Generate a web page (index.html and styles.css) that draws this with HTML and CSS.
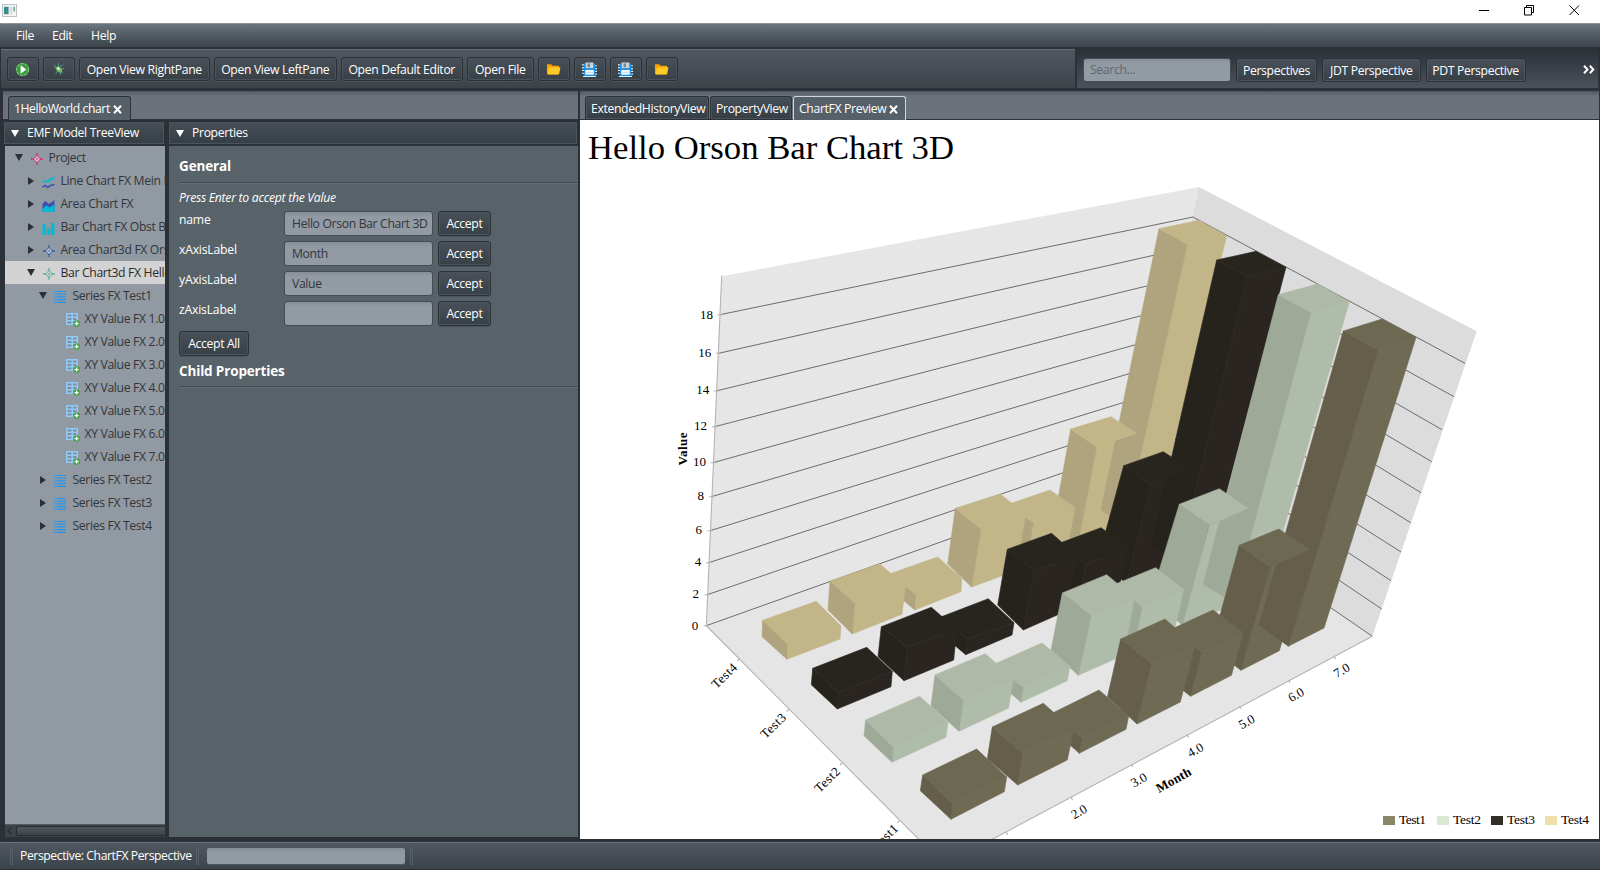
FILE: index.html
```
<!DOCTYPE html>
<html lang="en">
<head>
<meta charset="utf-8">
<title>ChartFX Perspective</title>
<link rel="stylesheet" href="styles.css">
</head>
<body>
<svg class="defs" width="0" height="0">
  <symbol id="folder" viewBox="0 0 16 16"><path d="M1 3.2Q1 2.500 1.800 2.500H5.500L7 4H13.200Q14 4 14 5V13H2Q1 13 1 12Z" fill="#ffa000"/><path d="M3.600 5.600H14.600Q15.500 5.600 15.300 6.500L14 12.600Q13.800 13.400 13 13.400H2.200Q1.500 13.400 1.700 12.600L3 6.200Q3.100 5.600 3.600 5.600Z" fill="#ffca28"/></symbol>
  <symbol id="save" viewBox="0 0 16 16"><path d="M3 1H13L14 3V15H2V2.500Z" fill="#1f8fe8"/><path d="M0 3H2M0 6H2M0 9H2M0 12H2M14 4H16M14 7H16M14 10H16M14 13H16M1 15.500H15" stroke="#d8f2fb" stroke-width="1.300"/><rect x="4" y="0.500" width="8" height="6" fill="#c9d4db"/><rect x="6" y="1.500" width="2.500" height="4" fill="#75858f"/><rect x="3.500" y="8.500" width="9" height="5" fill="#f6fbff"/><path d="M3.500 11H12.500" stroke="#b9d9ee"/></symbol>
  <symbol id="line" viewBox="0 0 13 13"><path d="M0.500 6L3.500 5L6 6L8.500 2.500L10 3.500L12.500 1" fill="none" stroke="#00bcd4" stroke-width="1.500"/><path d="M0.500 11L3.500 9.500L5.500 11.500L8.500 9.500L12.500 8.500" fill="none" stroke="#3f51b5" stroke-width="1.600"/></symbol>
  <symbol id="area" viewBox="0 0 13 13"><path d="M0.500 4.500L3.500 2L7 5L12.500 1V13H0.500Z" fill="#3f51b5"/><path d="M0.500 9.500L4.500 6.500L7.500 8.500L12.500 5.500V13H0.500Z" fill="#00bcd4"/></symbol>
  <symbol id="bar" viewBox="0 0 13 13"><path d="M0.500 2H3.800V13H0.500ZM4.800 6.500H8.200V13H4.800ZM9.200 1H12.500V13H9.200Z" fill="#00bcd4"/></symbol>
  <symbol id="star" viewBox="0 0 12 12"><path d="M6 2.500L9.500 6L6 9.500L2.500 6Z" fill="#d9d9d9" stroke="currentColor" stroke-width="0.900"/><path d="M6 0V3M6 9V12M0 6H3M9 6H12" stroke="currentColor" stroke-width="1.400" stroke-dasharray="1.600 0.600"/><path d="M4.500 6H7.500M6 4.500V7.500" stroke="currentColor" stroke-width="0.600"/></symbol>
  <symbol id="list" viewBox="0 0 12 12"><path d="M0 .5H1.500M0 3.200H1.500M0 5.900H1.500M0 8.600H1.500M0 11.300H1.500M2.500 .5H12M2.500 3.200H12M2.500 5.900H12M2.500 8.600H12M2.500 11.300H12" stroke="#2196f3" stroke-width="1.200"/></symbol>
  <symbol id="grid" viewBox="0 0 14 14"><path d="M0 0H12V12H0Z" fill="#90caf9"/><path d="M1.500 1.500H5.500V3.500H1.500ZM7 1.500H10.500V3.500H7ZM1.500 5H5.500V7H1.500ZM7 5H10.500V7H7ZM1.500 8.500H5.500V10.500H1.500ZM7 8.500H10.500V10.500H7Z" fill="#858f9a"/><circle cx="10.600" cy="10.600" r="3.300" fill="#43a047"/><path d="M8.600 10.600H12.600M10.600 8.600V12.600" stroke="#fff" stroke-width="1.300"/></symbol>
  <symbol id="cross" viewBox="0 0 9 9"><path d="M1 0.800L8 8.200M8 0.800L1 8.200" stroke="#fff" stroke-width="2"/></symbol>
</svg>

<header class="titlebar">
  <svg class="app-icon" viewBox="0 0 16 14"><rect x=".5" y=".5" width="15" height="13" fill="#f3f4f4" stroke="#b9bdbf"/><path d="M2 3H7V11H2Z" fill="#3d8a8c"/><path d="M8 3H11V11H8Z" fill="#d8dedf"/><path d="M12 3H14V8H12Z" fill="#78b59a"/></svg>
  <svg class="win-ctl" viewBox="0 0 105 12"><path d="M1 6.500H11M46.500 3.500H53.500V11H46.500ZM48.500 3.500V1.500H55.500V8.500H53.500M91.500 1.500L101 11M101 1.500L91.500 11" fill="none" stroke="#000"/></svg>
</header>

<nav class="menubar"><span>File</span><span>Edit</span><span>Help</span></nav>

<div class="toolbars">
  <div class="toolbar main">
    <button class="btn ico"><svg viewBox="0 0 16 16"><circle cx="8" cy="8" r="7.300" fill="#3c9a41"/><circle cx="8" cy="8" r="6.300" fill="none" stroke="#9bd49a" stroke-dasharray="3 1.500"/><path d="M6 3.500L12 8L6 12.500Z" fill="#fff"/></svg></button>
    <button class="btn ico"><svg viewBox="0 0 16 16"><path d="M3 3L13 12M8 1V5M3 6L7 7M9 5L13 3M7 9L5 13M11 7L14 7M10 10L10 14" stroke="#4e9a84" stroke-width="1"/><ellipse cx="8.700" cy="8" rx="3.900" ry="2.500" transform="rotate(45 8.700 8)" fill="#77b765"/><ellipse cx="7.800" cy="7" rx="1.700" ry="1.200" transform="rotate(45 7.800 7)" fill="#d8f1e4"/></svg></button>
    <button class="btn b-right">Open View RightPane</button>
    <button class="btn b-left">Open View LeftPane</button>
    <button class="btn b-editor">Open Default Editor</button>
    <button class="btn b-file">Open File</button>
    <button class="btn ico"><svg><use href="#folder"/></svg></button>
    <button class="btn ico"><svg><use href="#save"/></svg></button>
    <button class="btn ico"><svg><use href="#save"/></svg></button>
    <button class="btn ico"><svg><use href="#folder"/></svg></button>
  </div>
  <div class="toolbar side">
    <div class="field search">Search...</div>
    <button class="btn b-persp">Perspectives</button>
    <button class="btn b-jdt">JDT Perspective</button>
    <button class="btn b-pdt">PDT Perspective</button>
    <svg class="more" viewBox="0 0 12 9"><path d="M1 .8L4.500 4.500L1 8.200M6.800 .8L10.300 4.500L6.800 8.200" fill="none" stroke="#fff" stroke-width="2"/></svg>
  </div>
</div>

<main class="work">
  <section class="editor">
    <div class="tabs"><div class="tab open t-file"><span>1HelloWorld.chart</span><svg><use href="#cross"/></svg></div></div>
    <div class="split">
      <div class="pane tree-pane">
        <div class="pane-head"><i class="tri"></i><span>EMF Model TreeView</span></div>
        <div class="tree" id="tree"></div>
        <div class="scroll"><svg viewBox="0 0 6 10"><path d="M5 1L1 5L5 9" fill="none" stroke="#22262b" stroke-width="1.300"/></svg><div class="thumb"></div></div>
      </div>
      <div class="pane">
        <div class="pane-head"><i class="tri"></i><span>Properties</span></div>
        <div class="props">
          <h2>General</h2>
          <p class="hint">Press Enter to accept the Value</p>
          <div class="row"><label>name</label><div class="field">Hello Orson Bar Chart 3D</div><button class="btn">Accept</button></div>
          <div class="row"><label>xAxisLabel</label><div class="field">Month</div><button class="btn">Accept</button></div>
          <div class="row"><label>yAxisLabel</label><div class="field">Value</div><button class="btn">Accept</button></div>
          <div class="row"><label>zAxisLabel</label><div class="field"></div><button class="btn">Accept</button></div>
          <button class="btn all">Accept All</button>
          <h2 class="child">Child Properties</h2>
        </div>
      </div>
    </div>
  </section>
  <section class="preview">
    <div class="tabs"><div class="tab t-hist"><span>ExtendedHistoryView</span></div><div class="tab t-prop"><span>PropertyView</span></div><div class="tab open focus t-chart"><span>ChartFX Preview</span><svg><use href="#cross"/></svg></div></div>
    <svg class="chart" id="chart" viewBox="580 120 1018.500 719">
      <polygon points="721.7,276.3 1199,187 1134.5,472.8 706.3,625.7" fill="#e6e6e6"/>
      <polygon points="1199,187 1476.7,331.3 1372.3,636.3 1134.5,472.8" fill="#dcdcdc"/>
      <polygon points="706.3,625.7 1134.5,472.8 1372.3,636.3 944.3,865" fill="#e5e5e5"/>
      <g class="gridlines">
        <polyline points="720,314.7 1193,217 1465,363.3"/><polyline points="718.7,353.3 1185,248.2 1454,396.7"/>
        <polyline points="716,391 1178.4,278.3 1442,429.7"/><polyline points="714.7,426.7 1171.7,307.8 1431.7,461.7"/>
        <polyline points="713,462.7 1165.3,336.4 1421,492.7"/><polyline points="711.3,496.7 1158.8,365 1410.7,522.7"/>
        <polyline points="710,530.7 1152.4,393.5 1401,552"/><polyline points="708.7,562.7 1146.3,420.3 1391,580.7"/>
        <polyline points="707.3,594.7 1140.5,446.3 1381.7,609"/><polyline points="706.3,625.7 1134.5,472.8 1372.3,636.3"/>
      </g>
      <path class="axis" d="M721.700 275.500L706.300 625.700L944.300 865L1372.300 636.300M717.500 314.700H722M716 353.300H720.500M713.500 391H718M712 426.700H716.500M710.500 462.700H715M709 496.700H713.500M707.500 530.700H712M706 562.700H710.500M704.700 594.700H709M703.700 625.700H708M739.300 659L737.300 661M788.700 709.500L786.700 711.500M842 763L840 765M899.300 821L897.300 823M1006 832L1008 835M1071 797L1072.500 800M1131.500 764L1133 767M1187 734.500L1188.500 737.500M1239.500 706L1241 709M1288.500 680L1290 683M1334 656L1335.500 659"/>
      <g id="bars"></g>
      <text class="title" x="588" y="158.500" textLength="366" lengthAdjust="spacingAndGlyphs">Hello Orson Bar Chart 3D</text>
      <g class="ticks end">
        <text x="713" y="318.700">18</text><text x="711.300" y="356.700">16</text><text x="709.300" y="394.300">14</text><text x="707" y="430.300">12</text><text x="706" y="466.300">10</text><text x="704" y="500.300">8</text><text x="702" y="533.700">6</text><text x="701.300" y="566.300">4</text><text x="699" y="598.300">2</text><text x="698.300" y="629.700">0</text>
        <text transform="translate(738 668.500) rotate(-44)" textLength="30">Test4</text><text transform="translate(787 718.500) rotate(-44)" textLength="30">Test3</text><text transform="translate(841 772.500) rotate(-44)" textLength="30">Test2</text><text transform="translate(899 829.500) rotate(-44)" textLength="30">Test1</text>
      </g>
      <g class="ticks mid">
        <text transform="translate(1079.200 812) rotate(-30)" y="4">2.0</text><text transform="translate(1139 780.300) rotate(-30)" y="4">3.0</text><text transform="translate(1195.600 750.300) rotate(-30)" y="4">4.0</text><text transform="translate(1246.800 722) rotate(-30)" y="4">5.0</text><text transform="translate(1296.200 695) rotate(-30)" y="4">6.0</text><text transform="translate(1341.800 670.700) rotate(-30)" y="4">7.0</text>
        <text class="bold" transform="translate(1173.700 780.300) rotate(-29)" y="4" textLength="38">Month</text>
        <text class="bold" transform="translate(682.700 449) rotate(-90)" y="4" textLength="33">Value</text>
      </g>
      <g class="legend">
        <rect x="1383" y="816" width="12" height="9" fill="#8b8567"/><text x="1399" y="824" textLength="27">Test1</text>
        <rect x="1437" y="816" width="12" height="9" fill="#d9e8d2"/><text x="1453" y="824" textLength="28">Test2</text>
        <rect x="1491" y="816" width="12" height="9" fill="#332d28"/><text x="1507" y="824" textLength="28">Test3</text>
        <rect x="1545" y="816" width="12" height="9" fill="#efdfab"/><text x="1561" y="824" textLength="28">Test4</text>
      </g>
    </svg>
  </section>
</main>

<footer class="status"><i class="sep"></i><span>Perspective: ChartFX Perspective</span><i class="sep"></i><div class="progress"></div><i class="sep"></i></footer>
<script src="app.js"></script>
</body>
</html>
```
FILE: styles.css
```
* { box-sizing: border-box; }
body { margin: 0; width: 1600px; height: 870px; overflow: hidden; display: flex; flex-direction: column; background: #2c3138; font: 12.2px/16px "Open Sans", "Noto Sans", sans-serif; letter-spacing: -0.34px; color: #fff; white-space: nowrap; }
.defs { position: absolute; }
svg { display: block; flex: none; }
.titlebar { height: 23px; flex: none; background: #fff; display: flex; justify-content: space-between; }
.app-icon { width: 15px; height: 13px; margin: 4px 0 0 2px; }
.win-ctl { width: 105px; height: 12px; margin: 4px 17px 0 0; }
.menubar { height: 24px; flex: none; display: flex; padding: 4px 16px; background: linear-gradient(#69747c, #3c434a); border-top: 1px solid #8a949a; }
.menubar span { width: 36px; }
.menubar span:nth-child(2) { width: 39px; }
.toolbars { height: 44px; flex: none; display: flex; padding: 2px 2px 3px 1px; gap: 2px; }
.toolbar { display: flex; align-items: flex-start; }
.main { width: 1074px; padding: 7px 0 0 6px; gap: 4.500px; background: linear-gradient(#50575f, #3c444a); border-top: 1px solid #676f76; }
.side { flex: 1; padding: 9px 0 0 6px; gap: 5px; background: linear-gradient(#2c3138, #4a5159); }
.btn { height: 24px; padding: 1px 0 0; border: 1px solid #2c3138; border-radius: 3px; background: linear-gradient(#495059, #384046); box-shadow: inset 0 0 0 1px #4b535c, 0 1px 0 #4b535c; color: #fff; font: inherit; letter-spacing: inherit; display: flex; align-items: center; justify-content: center; flex: none; }
.ico { width: 31.500px; }
.ico svg { width: 15px; height: 15px; }
.b-right { width: 130.500px; }
.b-left { width: 122.500px; }
.b-editor { width: 121.500px; }
.b-file { width: 66.500px; }
.b-persp { width: 81px; }
.b-jdt { width: 98.500px; }
.b-pdt { width: 100px; }
.field { height: 25px; border: 1px solid #444c54; border-radius: 3px; background: linear-gradient(#868e97, #929aa4 5px); color: #32363a; padding: 4px 7px; }
.search { width: 148px; height: 24px; padding: 3px 6px; color: #5f676f; }
.more { width: 12px; height: 9px; margin: 7px 3px 0 auto; }
.work { height: 751px; flex: none; display: flex; gap: 2px; padding-left: 3px; }
.editor { width: 575px; display: flex; flex-direction: column; }
.tabs { height: 29px; flex: none; display: flex; padding: 5px 5px 0; gap: 1.500px; background: linear-gradient(#50575f, #6b727c 5px); border-bottom: 1px solid #2c3138; }
.tab { height: 23px; padding: 4px 0 0 5px; display: flex; background: linear-gradient(#464e56, #363e44); border: 1px solid #2c3138; border-bottom: 0; border-radius: 3px 3px 0 0; box-shadow: inset 0 0 0 1px #4b535c; }
.tab.open { height: 24px; background: #566068; box-shadow: none; }
.tab.focus { border-color: #d3d5d7; }
.tab svg { width: 9px; height: 9px; margin: 4px 0 0 4px; }
.t-file { width: 122.500px; }
.t-file span { width: 95px; }
.t-hist { width: 123.500px; }
.t-prop { width: 81.500px; }
.t-chart { width: 112.500px; }
.t-chart span { width: 86px; }
.t-file span { letter-spacing: -0.42px; }
.split { flex: 1; display: flex; gap: 3px; min-height: 0; padding: 1px 0 5px; }
.pane { flex: 1; display: flex; flex-direction: column; min-width: 0; }
.tree-pane { flex: none; width: 162px; }
.pane-head { height: 24px; flex: none; display: flex; align-items: center; gap: 8px; padding: 0 0 0 7px; margin-bottom: 1px; background: linear-gradient(#474f57, #363e45); border: 1px solid #2c3138; box-shadow: inset 0 0 0 1px #4b535c; }
.tri { border: 4px solid transparent; border-top: 7px solid #fff; border-bottom: 0; }
.tree { flex: 1; margin-left: 2px; background: #9199a2; color: #32363a; overflow: hidden; }
.node { height: 23px; display: flex; align-items: center; padding-top: 1px; }
.node.sel { background: #d3d3d3; color: #2b2b2b; }
.node svg { margin-top: 2px; }
.arrow { width: 9px; height: 9px; flex: none; display: flex; align-items: center; justify-content: center; margin-bottom: 1px; }
.arrow::before { content: ""; border: 4px solid transparent; }
.arrow.shut::before { border-left: 6px solid #2d3033; border-right: 0; }
.arrow.down::before { border-top: 7px solid #2d3033; border-bottom: 0; }
.scroll { height: 13px; flex: none; margin-left: 2px; display: flex; align-items: center; gap: 4px; padding-left: 2px; background: #3c434a; border-top: 1px solid #53595f; }
.scroll svg { width: 5px; height: 8px; }
.thumb { flex: 1; height: 10px; border: 1px solid #292e33; border-right: 0; border-radius: 2px 0 0 2px; background: linear-gradient(#4f565e, #3d444b); }
.props { flex: 1; margin-left: 1px; padding: 10px 0 0 10px; background: #586269; }
h2 { margin: 0; height: 27px; font-size: 13.5px; line-height: 20px; font-weight: bold; letter-spacing: -0.15px; border-bottom: 1px solid #434b52; box-shadow: 0 1px #667078; }
.hint { margin: 6px 0 4px; font-style: italic; line-height: 18px; letter-spacing: -0.27px; }
.row { height: 30px; display: flex; }
.row label { width: 105px; line-height: 18px; letter-spacing: -0.2px; }
.row .field { width: 149px; margin-right: 5px; }
.row .btn { width: 53px; height: 25px; padding: 0; }
.all { width: 70px; height: 25px; padding: 0; }
.child { margin-top: 5px; height: 26px; }
.preview { flex: 1; display: flex; flex-direction: column; margin-right: 1.500px; }
.preview .tabs { padding-left: 5px; }
.chart { width: 1018.500px; height: 719px; background: #fff; letter-spacing: 0; }
.gridlines { fill: none; stroke: #6c6c6c; stroke-width: 1; }
.axis { fill: none; stroke: #b4b4b4; stroke-width: 1.1; }
#bars polygon { stroke-width: 0.6; stroke-linejoin: round; }
.chart text { font-family: "Liberation Serif", serif; fill: #000; }
.chart .title { font-size: 33px; }
.ticks { font-size: 13px; }
.end { text-anchor: end; }
.mid { text-anchor: middle; }
.bold { font-weight: bold; }
.legend { font-size: 13.5px; }
.status { height: 28px; flex: none; display: flex; align-items: center; padding: 0 0 1px 10px; background: linear-gradient(#50575f, #3c444b); border-top: 1px solid #6b7279; border-bottom: 1px solid #2c3138; }
.status span { width: 173px; margin: 1px 3px 0 7px; letter-spacing: -0.42px; }
.sep { width: 3px; height: 18px; border: 1px solid #575f66; border-width: 0 1px; }
.progress { width: 198px; height: 16px; margin: 0 5px 0 8px; border-radius: 2px; background: linear-gradient(#858c95, #9199a3 4px); box-shadow: 0 1px #50575f; }
```
FILE: app.js
```
const SVG = 'http://www.w3.org/2000/svg';

// level, arrow state, icon, text, icon colour
const nodes = [
  [0, 'down', 'star', 'Project', '#d81b60'],
  [1, 'shut', 'line', 'Line Chart FX Mein L'],
  [1, 'shut', 'area', 'Area Chart FX'],
  [1, 'shut', 'bar', 'Bar Chart FX Obst Ba'],
  [1, 'shut', 'star', 'Area Chart3d FX Ors', '#1f4fa0'],
  [1, 'down', 'star', 'Bar Chart3d FX Hello', '#45a98f'],
  [2, 'down', 'list', 'Series FX Test1'],
  ...[1, 2, 3, 4, 5, 6, 7].map(n => [3, '', 'grid', `XY Value FX ${n}.0`]),
  ...[2, 3, 4].map(n => [2, 'shut', 'list', `Series FX Test${n}`])
];
const size = { star: 12, list: 12, grid: 14, line: 13, area: 13, bar: 13 };
document.getElementById('tree').innerHTML = nodes.map(([lv, st, ic, t, c]) => {
  const w = size[ic];
  const before = ic === 'star' ? 7 : 6;
  return `<div class="node${t.startsWith('Bar Chart3d') ? ' sel' : ''}" style="padding-left:${9.5 + lv * 12}px">` +
    `<i class="arrow ${st}"></i><svg width="${w}" height="${w}" style="color:${c || 'inherit'};margin-left:${before}px;margin-right:${25 - before - w}px"><use href="#${ic}"/></svg><span>${t}</span></div>`;
}).join('');

// Bar corners: top left, back, right, front; base left, front, right
const series = [
  { top: '#c2b689', side: '#b0a47e', front: '#c2b689', bars: [
    [762.7,620.3, 816.3,601.3, 841,626, 787,643.3, 762,636.7, 787,659.3, 840,639],
    [830,581, 880,564, 905.3,586, 855,603, 828,610, 852.3,634, 902,614.3],
    [890,573.7, 937.7,557, 961.7,578.3, 915.7,594.3, 889.3,588.3, 914.7,610, 961,591.7],
    [955.3,508.3, 1000,494, 1025.7,514, 981,528.7, 947.7,564, 971.7,587, 1016,570.7],
    [1008.3,504.3, 1050,490, 1075,507.7, 1033.3,522.7, 1003,546, 1026,566, 1067,549],
    [1070.7,429, 1111,416.7, 1136.7,433.3, 1096.7,447, 1053,527, 1077.5,546, 1117,531],
    [1159,228.7, 1199,220.3, 1226.7,236, 1187.3,244, 1101,510, 1125,526, 1157,510]] },
  { top: '#28251f', side: '#26231c', front: '#2a2520', bars: [
    [812.7,668.3, 866.7,647.3, 892.3,671.3, 838.3,692.7, 811.3,684.7, 837.3,709, 891,686.7],
    [881.3,626.7, 931.3,607.3, 956.7,629.3, 907.3,647.3, 878,656.7, 904,680.7, 953.7,660],
    [940,617.3, 988.3,598.7, 1014,622.7, 967.3,638.7, 938.7,631.7, 965.7,654.7, 1012,635],
    [1007.3,549.3, 1051.5,533.3, 1077.7,556.3, 1034,570.7, 997.7,605, 1023.3,630, 1064,612],
    [1059.3,543.3, 1101,527.7, 1127.3,546.7, 1086,564, 1052,586, 1079,608, 1119,590],
    [1123.7,465.7, 1163.3,451.7, 1190.7,469.3, 1150.7,484.3, 1099,556, 1126,584, 1163,570],
    [1216.7,260, 1256,251.3, 1286,267.3, 1247.3,276.7, 1151,546.7, 1178,562, 1212,547]] },
  { top: '#aeb9a8', side: '#9ea998', front: '#b0bcaa', bars: [
    [865.7,720, 919.7,696.3, 948,722.3, 893.3,747, 864,735.7, 892,762.3, 946,737.3],
    [935,675, 985.3,653.7, 1013,678.3, 963.3,700, 931,706, 959,731.3, 1008.7,708],
    [991.7,665.3, 1042,643, 1070,666, 1023.3,686.7, 993,678, 1021,702.3, 1067.3,680.7],
    [1062.3,593, 1106.7,574.7, 1134.3,597.7, 1091.3,615.3, 1051,650, 1078.3,675.3, 1124,655],
    [1113.3,585, 1155.7,567.7, 1183.7,589.3, 1142.3,606.3, 1107,628, 1133,650, 1174,632],
    [1179.3,504.3, 1219.3,488.7, 1248.3,508.3, 1209.3,525, 1151,597, 1182.3,625.3, 1222.7,609.3],
    [1278.3,294.7, 1317.7,284, 1349.3,301.7, 1310.7,312.3, 1203.3,584.3, 1233,602, 1268,583]] },
  { top: '#6d6852', side: '#645e4a', front: '#6e6a54', bars: [
    [922.7,775, 976.7,749, 1006.7,777, 952.7,803.7, 920.3,790.7, 951,819.3, 1004.3,791.7],
    [992.3,727, 1043.3,703.3, 1073.7,730, 1022.7,753.3, 987.3,758.7, 1017.7,785, 1067.3,760],
    [1050.7,714, 1099,690, 1128.7,716, 1082.3,737.7, 1050,727, 1079.3,753.3, 1126,729.3],
    [1120.7,639, 1165,619, 1195,645.7, 1151.7,663.3, 1107.5,696.7, 1137,724, 1180.3,702],
    [1171.7,629, 1213,610, 1243,632.3, 1202,652, 1162,674, 1190.6,696.3, 1231.5,675.3],
    [1239.3,545.3, 1278.7,529, 1309.7,549.3, 1270.3,567, 1211,648, 1241,670.3, 1279.3,650.7],
    [1343.3,331, 1382,319, 1416,337.3, 1378.3,350, 1259.3,624.7, 1288.3,646.3, 1324,628]] }
];
const faces = { top: [0, 1, 2, 3], side: [0, 3, 5, 4], front: [3, 2, 6, 5] };
const layer = document.getElementById('bars');
function face(s, i, name) {
  const b = s.bars[i];
  const p = document.createElementNS(SVG, 'polygon');
  p.setAttribute('points', faces[name].map(k => b[2 * k] + ',' + b[2 * k + 1]).join(' '));
  p.setAttribute('fill', s[name]);
  p.setAttribute('stroke', s[name]);
  layer.append(p);
}
for (const s of series) {
  face(s, 6, 'front');
  face(s, 5, 'front');
  face(s, 6, 'side');
  face(s, 6, 'top');
  face(s, 5, 'side');
  face(s, 5, 'top');
  for (let i = 4; i >= 0; i--) {
    face(s, i, 'front');
    face(s, i, 'side');
    face(s, i, 'top');
  }
}
```
